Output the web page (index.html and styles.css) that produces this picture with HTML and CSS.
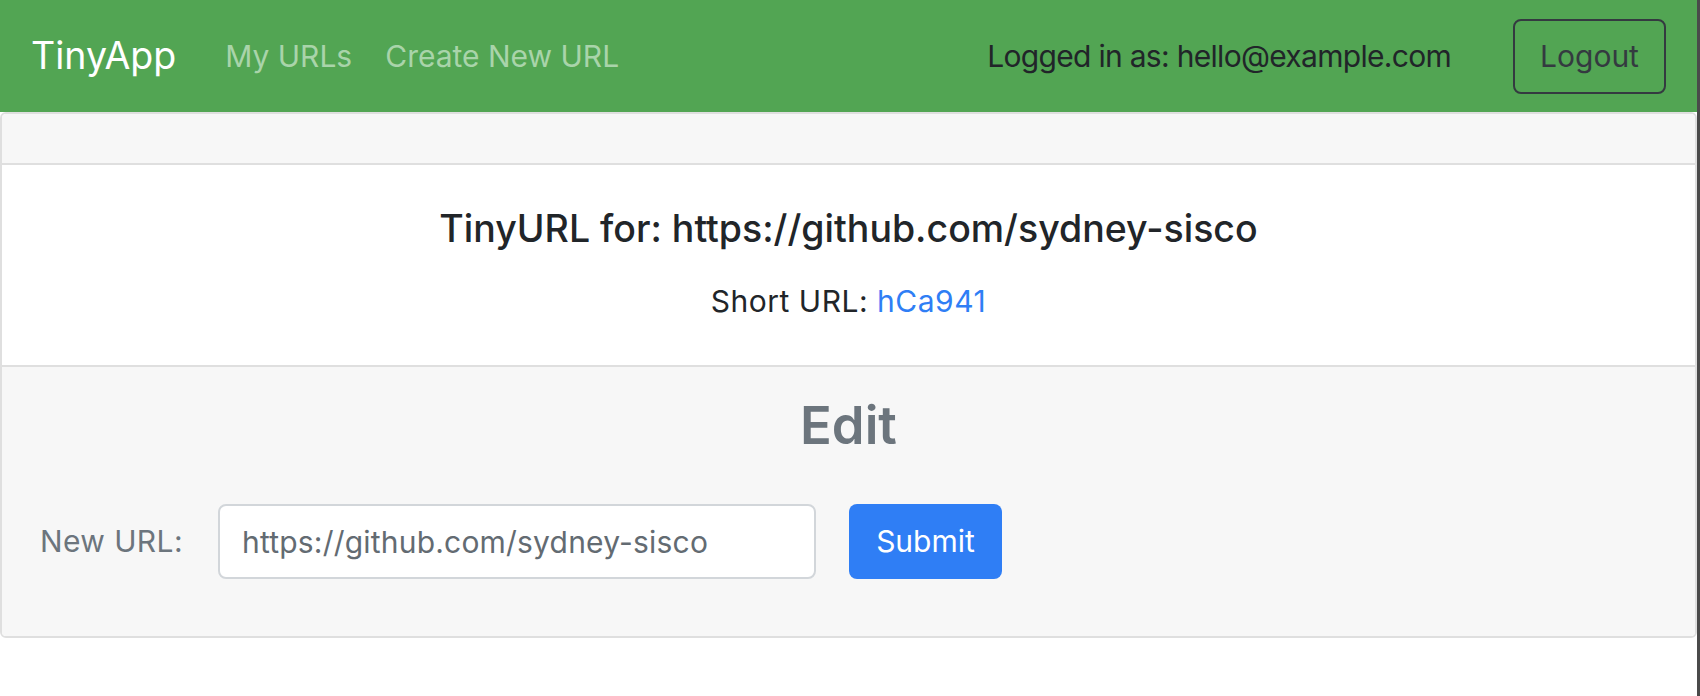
FILE: index.html
```html
<!DOCTYPE html>
<html lang="en">
<head>
<meta charset="utf-8">
<title>TinyApp</title>
<link rel="stylesheet" href="styles.css">
</head>
<body>
<div class="window">
  <div class="app">
    <nav class="navbar">
      <a class="brand" href="#">TinyApp</a>
      <div class="nav-links">
        <a class="nav-link" href="#">My URLs</a>
        <a class="nav-link" href="#">Create New URL</a>
      </div>
      <div class="nav-right">
        <span class="login-text">Logged in as: hello@example.com</span>
        <button class="btn-logout" type="button">Logout</button>
      </div>
    </nav>
    <main class="card">
      <div class="card-header"></div>
      <div class="card-body">
        <h5 class="card-title">TinyURL for: https://github.com/sydney-sisco</h5>
        <p class="card-text">Short URL: <a class="short-link" href="#">hCa941</a></p>
      </div>
      <div class="card-footer">
        <h3 class="edit-title">Edit</h3>
        <form class="edit-form">
          <label class="form-label" for="longURL">New URL:</label>
          <input class="form-input" id="longURL" type="text" value="https://github.com/sydney-sisco">
          <button class="btn-submit" type="submit">Submit</button>
        </form>
      </div>
    </main>
  </div>
  <div class="edge"></div>
</div>
</body>
</html>
```

FILE: styles.css
```css
* { box-sizing: border-box; }

html, body {
  margin: 0;
  padding: 0;
  height: 100%;
}

body {
  font-family: Inter, "Liberation Sans", sans-serif;
  font-size: 30px;
  line-height: 1.5;
  color: #212529;
  background: #ffffff;
}

.window {
  display: flex;
  height: 696px;
}

.app {
  flex: 1;
  min-width: 0;
}

.edge {
  width: 3px;
  background: #4a4a4a;
}

/* Navbar */
.navbar {
  height: 112px;
  background: #52a553;
  display: flex;
  align-items: center;
  padding: 0 31px 0 31px;
}

.brand {
  font-size: 37.5px;
  color: #ffffff;
  text-decoration: none;
  line-height: 1;
  margin-right: 30px;
}

.nav-links {
  display: flex;
  gap: 33px;
  padding-left: 19px;
}

.nav-link {
  color: #a9d4aa;
  text-decoration: none;
}

.nav-right {
  margin-left: auto;
  display: flex;
  align-items: center;
  gap: 62px;
}

.login-text {
  color: #212529;
  letter-spacing: -0.7px;
}

.btn-logout {
  height: 75px;
  width: 153px;
  font: inherit;
  color: #343a40;
  background: transparent;
  border: 2px solid #343a40;
  border-radius: 8px;
  padding: 0;
}

/* Card */
.card {
  border: 2px solid #dfdfdf;
  border-radius: 6px;
  overflow: hidden;
}

.card-header {
  height: 51px;
  background: #f7f7f7;
  border-bottom: 2px solid #dfdfdf;
}

.card-body {
  height: 200px;
  background: #ffffff;
  text-align: center;
  padding-top: 41px;
}

.card-title {
  margin: 0;
  font-size: 37.5px;
  font-weight: 500;
  line-height: 45px;
}

.card-text {
  margin: 28px 0 0;
  line-height: 45px;
  letter-spacing: 0.5px;
}

.short-link {
  color: #2f7ef5;
  text-decoration: none;
}

.card-footer {
  background: #f7f7f7;
  border-top: 2px solid #dfdfdf;
  height: 271px;
  padding: 27px 38px 0;
}

.edit-title {
  margin: 0;
  text-align: center;
  font-size: 52.5px;
  font-weight: 600;
  line-height: 63px;
  color: #6c757d;
}

.edit-form {
  margin-top: 47px;
  display: flex;
  align-items: center;
}

.form-label {
  color: #6c757d;
  margin-right: 35px;
  letter-spacing: 0.4px;
}

.form-input {
  width: 598px;
  height: 75px;
  font: inherit;
  letter-spacing: 0.2px;
  color: #636b72;
  background: #ffffff;
  border: 2px solid #d2d6da;
  border-radius: 8px;
  padding: 0 22px;
  margin-right: 33px;
}

.btn-submit {
  width: 153px;
  height: 75px;
  font: inherit;
  color: #ffffff;
  background: #2f7ef5;
  border: 0;
  border-radius: 8px;
  padding: 0;
}
```
